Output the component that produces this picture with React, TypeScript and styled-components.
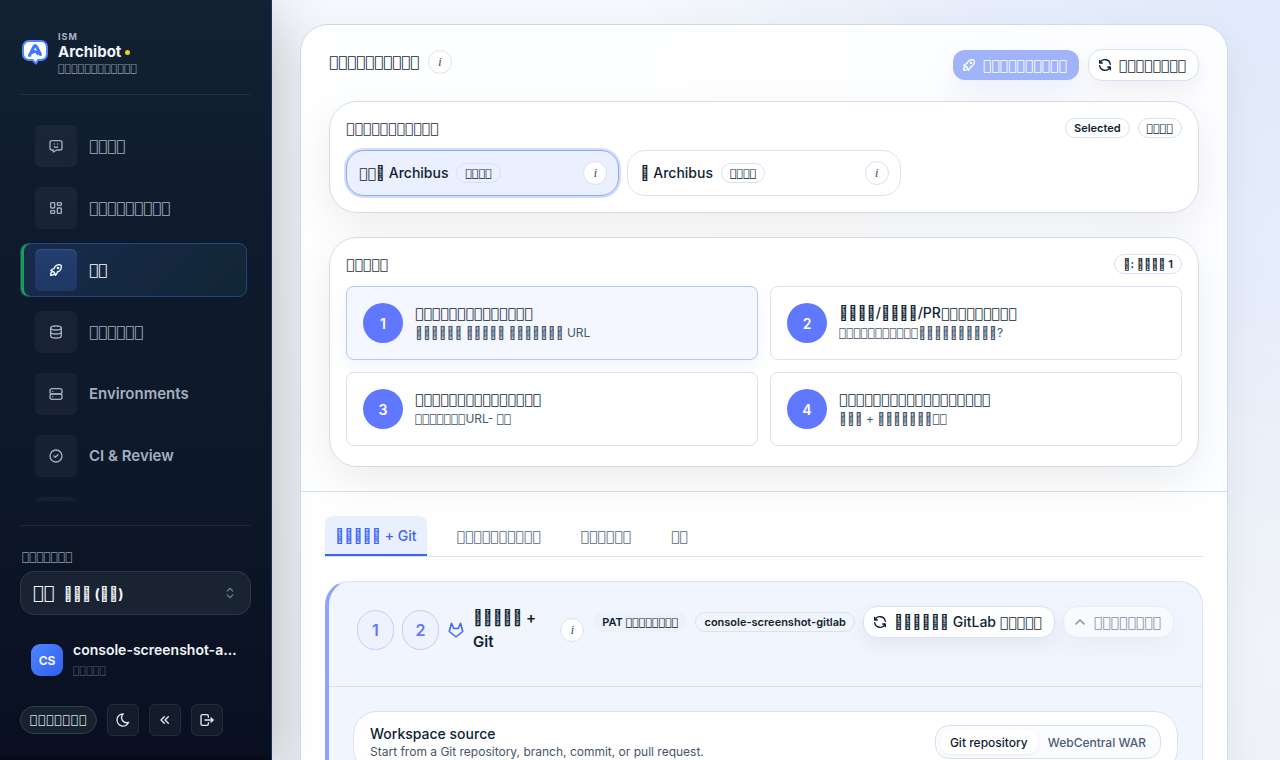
import React from 'react';
import styled, { createGlobalStyle, css } from 'styled-components';
import {
  TbBrandGitlab,
  TbChevronsLeft,
  TbChevronUp,
  TbCircleCheck,
  TbDatabase,
  TbLayoutDashboard,
  TbLogout,
  TbMessageChatbot,
  TbMoon,
  TbRefresh,
  TbRocket,
  TbSelector,
  TbServer,
} from 'react-icons/tb';

const GlobalStyle = createGlobalStyle`
  *, *::before, *::after { box-sizing: border-box; }
  html, body, #root { height: 100%; }
  body {
    margin: 0;
    overflow: hidden;
    color: #0f1f33;
    font-family: Inter, "Liberation Sans", sans-serif;
    font-size: 14px;
    background:
      radial-gradient(circle at 100% 0, #e1eafb 0, rgba(228, 235, 250, 0.8) 320px, rgba(240, 244, 249, 0) 640px),
      linear-gradient(180deg, #f5f8fc 0%, #eff3f7 100%);
  }
  button, select { font: inherit; color: inherit; }
  h1, h2, h3, p { margin: 0; font-weight: inherit; }
`;

/* ---------- glyph runs ---------- */

const OutlineRun = styled.span`
  font-family: "DejaVu Sans", sans-serif;
  font-weight: 400;
  line-height: 1;
`;

const O = ({ n }: { n: number }) => <OutlineRun>{'\uE000'.repeat(n)}</OutlineRun>;
const h = (n: number) => '\u{10FFFD}'.repeat(n);

/* ---------- shell ---------- */

const Shell = styled.div`
  display: flex;
  height: 100vh;
`;

const Sidebar = styled.aside`
  flex: 0 0 272px;
  min-width: 0;
  display: flex;
  flex-direction: column;
  padding: 30px 20px 24px;
  border-right: 1px solid #1b3358;
  background: linear-gradient(180deg, #122233 0%, #0f1a2c 30%, #0d1828 62%, #0a1122 92%, #090f20 100%);
  box-shadow: inset 0 -4px 0 #060a19, 0 12px 56px rgba(0, 0, 0, 0.25);
  color: #f1f5f9;
`;

const Brand = styled.div`
  display: flex;
  align-items: center;
  gap: 8px;
  padding-bottom: 18px;
  border-bottom: 1px solid #222e3e;
`;

const BrandText = styled.div`
  display: flex;
  flex-direction: column;
`;

const Eyebrow = styled.span`
  font-size: 9px;
  font-weight: 700;
  line-height: 14px;
  letter-spacing: 1px;
  color: #a9b4c4;
`;

const BrandName = styled.strong`
  display: flex;
  align-items: center;
  gap: 4px;
  font-size: 15px;
  font-weight: 700;
  line-height: 16px;
`;

const StatusDot = styled.span`
  width: 5px;
  height: 5px;
  border-radius: 50%;
  background: #facc15;
`;

const Muted = styled.span<{ $tone?: string }>`
  font-size: 11px;
  line-height: 16px;
  color: ${p => p.$tone || '#8d99aa'};
`;

const Nav = styled.nav`
  flex: 1;
  min-height: 0;
  overflow: hidden;
  display: flex;
  flex-direction: column;
  gap: 8px;
  margin: 24px 4px 24px 0;
`;

const NavTile = styled.span`
  display: grid;
  place-items: center;
  width: 42px;
  height: 42px;
  border-radius: 6px;
  background: rgba(255, 255, 255, 0.045);
  font-size: 16px;
`;

const NavLink = styled.a<{ $active?: boolean }>`
  flex: 0 0 54px;
  display: flex;
  align-items: center;
  gap: 12px;
  padding: 0 14px;
  border: 1px solid transparent;
  border-radius: 8px;
  color: #a3afc0;
  font-size: 15px;
  font-weight: 600;
  line-height: 20px;
  text-decoration: none;
  ${p => p.$active && css`
    color: #fff;
    border-color: #21457a;
    background: linear-gradient(135deg, #182b4e 0%, #152841 50%, #112634 100%);
    box-shadow: inset 3px 0 0 #16a34a;
    ${NavTile} {
      background: linear-gradient(180deg, #223f70, #1f3764);
      box-shadow: inset 0 1px 0 #35517f;
    }
  `}
`;

const SideFooter = styled.div`
  padding-top: 24px;
  border-top: 1px solid #1c2838;
`;

const LangLabel = styled.label`
  display: block;
  padding-left: 2px;
  margin-bottom: 7px;
  font-size: 12px;
  line-height: 14px;
  color: #8d99aa;
`;

const LangField = styled.div`
  display: flex;
  align-items: center;
  gap: 9px;
  height: 44px;
  padding: 0 12px;
  border: 1px solid #2c3848;
  border-radius: 14px;
  background: #1a2332;
`;

const Flag = styled.span`
  font-size: 18px;
  line-height: 18px;
`;

const LangSelect = styled.select`
  flex: 1;
  min-width: 0;
  padding: 0;
  border: 0;
  outline: 0;
  appearance: none;
  background: transparent;
  font-size: 14px;
  font-weight: 700;
`;

const SelectorIcon = styled(TbSelector)`
  width: 16px;
  height: 16px;
  color: #64748b;
`;

const User = styled.div`
  display: flex;
  align-items: center;
  gap: 10px;
  height: 48px;
  margin: 21px 0 20px;
  padding: 0 11px;
`;

const Avatar = styled.span`
  flex: none;
  display: grid;
  place-items: center;
  width: 32px;
  height: 32px;
  border-radius: 9px;
  background: linear-gradient(135deg, #4f86ff, #2f5ff0);
  font-size: 12px;
  font-weight: 700;
`;

const UserText = styled.div`
  min-width: 0;
  display: flex;
  flex-direction: column;
  gap: 2px;
  padding-bottom: 2px;
`;

const UserName = styled.span`
  overflow: hidden;
  text-overflow: ellipsis;
  white-space: nowrap;
  font-weight: 600;
  line-height: 20px;
`;

const SideActions = styled.div`
  display: flex;
  align-items: center;
  gap: 10px;
`;

const SidePill = styled.button`
  height: 28px;
  padding: 0 9px;
  border: 1px solid #333f4e;
  border-radius: 14px;
  background: #18212e;
  color: #dbe2ea;
  font-size: 12px;
  letter-spacing: 1px;
  line-height: 14px;
`;

const SideButton = styled.button`
  display: grid;
  place-items: center;
  width: 32px;
  height: 32px;
  padding: 0;
  border: 1px solid #222d3b;
  border-radius: 6px;
  background: #121c2a;
  color: #e5eaf0;
  font-size: 16px;
`;

/* ---------- main ---------- */

const Main = styled.main`
  flex: 1;
  min-width: 0;
  padding: 24px 52px 0 28px;
`;

const Panel = styled.div`
  border: 1px solid #d0d9e8;
  border-radius: 28px;
  background: rgba(255, 255, 255, 0.9);
  box-shadow: 0 12px 40px rgba(15, 23, 42, 0.06);
`;

const Overview = styled.section`
  display: flex;
  flex-direction: column;
  padding: 24px 28px;
  border-bottom: 1px solid #d8e1ea;
`;

const Spread = styled.div<{ $bottom?: number; $top?: boolean }>`
  display: flex;
  align-items: ${p => (p.$top ? 'flex-start' : 'center')};
  justify-content: space-between;
  gap: 8px;
  margin-bottom: ${p => p.$bottom || 0}px;
`;

const Group = styled.div<{ $gap?: number }>`
  display: flex;
  align-items: center;
  gap: ${p => p.$gap || 8}px;
`;

const PageTitle = styled.h1`
  font-size: 15px;
  line-height: 26px;
`;

const Info = styled.button`
  flex: none;
  display: grid;
  place-items: center;
  width: 24px;
  height: 24px;
  padding: 0;
  border: 1px solid #d9e2f1;
  border-radius: 50%;
  background: #fff;
  color: #334155;
  font: italic 400 12px/14px "Liberation Serif", serif;
`;

const Button = styled.button<{ $primary?: boolean; $faded?: boolean }>`
  flex: none;
  display: inline-flex;
  align-items: center;
  gap: 6px;
  height: 32px;
  padding: 0 12px 0 8px;
  border: 1px solid #d9e2f1;
  border-radius: 14px;
  background: #fff;
  font-weight: 500;
  line-height: 20px;
  white-space: nowrap;
  box-shadow: 0 8px 20px rgba(15, 23, 70, 0.06);
  opacity: ${p => (p.$faded ? 0.5 : 1)};
  svg { width: 16px; height: 16px; }
  ${p => p.$primary && css`
    height: 30px;
    border: 0;
    border-radius: 12px;
    background: #9fb4fb;
    color: #fff;
    box-shadow: 0 10px 24px rgba(79, 110, 247, 0.1);
  `}
`;

const Card = styled.section<{ $last?: boolean }>`
  padding: 16px 16px ${p => (p.$last ? 20 : 16)}px;
  border: 1px solid #d3dcea;
  border-radius: 28px;
  background: #fff;
  box-shadow: 0 14px 40px rgba(0, 0, 0, 0.07);
  & + & { margin-top: 24px; }
`;

const CardTitle = styled.h2`
  font-size: 14px;
  line-height: 20px;
  color: #1e2b3d;
`;

const Badge = styled.span<{ $plain?: boolean }>`
  flex: none;
  display: inline-flex;
  align-items: center;
  height: 20px;
  padding: 0 8px;
  border: 1px solid ${p => (p.$plain ? 'transparent' : '#d9e2f1')};
  border-radius: 10px;
  background: ${p => (p.$plain ? '#edf1fa' : 'transparent')};
  font-size: 11px;
  font-weight: 600;
  line-height: 14px;
  white-space: pre;
`;

const Options = styled.div`
  display: grid;
  grid-template-columns: repeat(3, 1fr);
  gap: 8px;
`;

const Option = styled.div<{ $selected?: boolean }>`
  display: flex;
  align-items: center;
  gap: 8px;
  height: 46px;
  padding: 0 11px 0 12px;
  border: 1px solid #d9e2f1;
  border-radius: 18px;
  font-weight: 500;
  line-height: 20px;
  ${Info} { margin-left: auto; }
  ${p => p.$selected && css`
    border-color: #8fa8f8;
    background: #eaf0fe;
    box-shadow: 0 0 0 2px #d3defc;
  `}
`;

const Steps = styled.ol`
  display: grid;
  grid-template-columns: repeat(2, 1fr);
  gap: 12px;
  margin: 0;
  padding: 0;
  list-style: none;
`;

const Step = styled.li<{ $current?: boolean }>`
  display: flex;
  align-items: center;
  gap: 12px;
  height: 74px;
  padding: 0 16px;
  border: 1px solid #d9e2ef;
  border-radius: 8px;
  background: #fff;
  ${p => p.$current && css`
    border-color: #b9c7f3;
    background: #f4f7ff;
    box-shadow: 0 8px 20px rgba(79, 110, 247, 0.07);
  `}
`;

const StepNumber = styled.span`
  flex: none;
  display: grid;
  place-items: center;
  width: 40px;
  height: 40px;
  border-radius: 50%;
  background: #6078ff;
  color: #fff;
  font-weight: 600;
`;

const StepTitle = styled.h3`
  font-size: 14px;
  font-weight: 500;
  line-height: 20px;
`;

const Hint = styled.p<{ $line?: number }>`
  font-size: 12px;
  line-height: ${p => p.$line || 20}px;
  color: #46566c;
`;

const Workspace = styled.section`
  padding: 24px;
`;

const Tabs = styled.div`
  display: flex;
  gap: 20px;
  margin-bottom: 24px;
  border-bottom: 1px solid #dbe3f0;
`;

const Tab = styled.button<{ $active?: boolean }>`
  height: 40px;
  padding: 2px 10px 0;
  border: 0;
  border-bottom: 2px solid ${p => (p.$active ? '#3b66f5' : 'transparent')};
  border-radius: 8px 8px 0 0;
  background: ${p => (p.$active ? '#e9effd' : 'transparent')};
  color: ${p => (p.$active ? '#3b66f5' : '#56657c')};
  font-weight: 500;
  line-height: 20px;
`;

const Stage = styled.article`
  border: 1px solid #d9e2f2;
  border-left: 4px solid #8ea3fb;
  border-radius: 24px;
  background: #f1f5fe;
`;

const StageHeader = styled.header`
  display: flex;
  align-items: flex-start;
  gap: 9px;
  padding: 24px 28px 32px;
  border-bottom: 1px solid #d7e0ee;
`;

const StageHeading = styled.div`
  flex: 1;
  min-width: 0;
  display: flex;
  align-items: center;
  gap: 8px;
`;

const StageNumber = styled.span`
  flex: none;
  display: grid;
  place-items: center;
  width: 37px;
  height: 40px;
  border: 1px solid #c3cef4;
  border-radius: 20px;
  background: #eef2fe;
  color: #6078ff;
  font-size: 16px;
  font-weight: 600;
`;

const GitlabIcon = styled(TbBrandGitlab)`
  flex: none;
  width: 18px;
  height: 18px;
  color: #3b66f5;
`;

const StageTitle = styled.h2`
  flex: 1;
  min-width: 0;
  font-size: 15px;
  font-weight: 600;
  line-height: 24px;
`;

const StageBody = styled.div`
  padding: 24px;
`;

const Source = styled.div`
  display: flex;
  align-items: center;
  justify-content: space-between;
  padding: 12px 16px;
  border: 1px solid #d9e2f1;
  border-radius: 24px;
  background: #fff;
`;

const Segmented = styled.div`
  display: flex;
  height: 34px;
  padding: 4px;
  border: 1px solid #d5dff0;
  border-radius: 14px;
  background: #fbfcff;
`;

const Segment = styled.button<{ $active?: boolean }>`
  padding: 0 10px;
  border: 0;
  border-radius: 10px;
  background: ${p => (p.$active ? '#fff' : 'transparent')};
  box-shadow: ${p => (p.$active ? '0 1px 3px rgba(15, 23, 42, 0.08)' : 'none')};
  color: ${p => (p.$active ? '#0f1f33' : '#4d5d76')};
  font-size: 12px;
  font-weight: 500;
`;

const Logo = () => (
  <svg width="30" height="30" viewBox="0 0 30 30" aria-hidden="true">
    <path
      d="M9 3h12a6 6 0 0 1 6 6v7a6 6 0 0 1-6 6h-3l-2 3.500-3.500-3.500H9a6 6 0 0 1-6-6v-7a6 6 0 0 1 6-6z"
      fill="#fff"
      stroke="#4f86ff"
      strokeWidth="2"
      strokeLinejoin="round"
    />
    <path d="M9.500 17.500L14 8.500q1.200-1.800 2.400 0L20.500 16.500M12 14.500q3-2.500 6 1" fill="none" stroke="#3f7bff" strokeWidth="3" strokeLinecap="round" strokeLinejoin="round" />
  </svg>
);

const navItems = [
  { icon: <TbMessageChatbot />, label: <O n={4} /> },
  { icon: <TbLayoutDashboard />, label: <O n={9} /> },
  { icon: <TbRocket />, label: <O n={2} />, active: true },
  { icon: <TbDatabase />, label: <O n={6} /> },
  { icon: <TbServer />, label: 'Environments' },
  { icon: <TbCircleCheck />, label: 'CI & Review' },
  { icon: null, label: null },
];

const steps = [
  { title: <O n={14} />, hint: `${h(6)} ${h(5)} ${h(7)} URL`, current: true },
  { title: <>{h(4)}/{h(4)}/PR<O n={9} /></>, hint: <><O n={11} />{h(10)}?</> },
  { title: <O n={15} />, hint: <><O n={7} />URL- <O n={2} /></> },
  { title: <O n={18} />, hint: <>{h(3)} + {h(7)}<O n={2} /></> },
];

export default function App() {
  return (
    <Shell>
      <GlobalStyle />
      <Sidebar>
        <Brand>
          <Logo />
          <BrandText>
            <Eyebrow>ISM</Eyebrow>
            <BrandName>Archibot<StatusDot /></BrandName>
            <Muted><O n={12} /></Muted>
          </BrandText>
        </Brand>
        <Nav>
          {navItems.map((item, i) => (
            <NavLink key={i} href="#" $active={item.active}>
              <NavTile>{item.icon}</NavTile>
              {item.label && <span>{item.label}</span>}
            </NavLink>
          ))}
        </Nav>
        <SideFooter>
          <LangLabel htmlFor="language"><O n={7} /></LangLabel>
          <LangField>
            <Flag><O n={2} /></Flag>
            <LangSelect id="language">
              <option>{`${h(3)} (${h(2)})`}</option>
            </LangSelect>
            <SelectorIcon />
          </LangField>
          <User>
            <Avatar>CS</Avatar>
            <UserText>
              <UserName>console-screenshot-admin</UserName>
              <Muted $tone="#475569"><O n={5} /></Muted>
            </UserText>
          </User>
          <SideActions>
            <SidePill><O n={7} /></SidePill>
            <SideButton aria-label="Theme"><TbMoon /></SideButton>
            <SideButton aria-label="Collapse"><TbChevronsLeft /></SideButton>
            <SideButton aria-label="Log out"><TbLogout /></SideButton>
          </SideActions>
        </SideFooter>
      </Sidebar>

      <Main>
        <Panel>
          <Overview>
            <Spread $bottom={20} $top>
              <Group $gap={9}>
                <PageTitle><O n={10} /></PageTitle>
                <Info>i</Info>
              </Group>
              <Group $gap={9}>
                <Button $primary><TbRocket /><span><O n={10} /></span></Button>
                <Button><TbRefresh /><span><O n={8} /></span></Button>
              </Group>
            </Spread>

            <Card>
              <Spread $bottom={12}>
                <CardTitle><O n={11} /></CardTitle>
                <Group>
                  <Badge>Selected</Badge>
                  <Badge><O n={4} /></Badge>
                </Group>
              </Spread>
              <Options>
                <Option $selected>
                  <span><O n={2} />{h(1)} Archibus</span>
                  <Badge><O n={4} /></Badge>
                  <Info>i</Info>
                </Option>
                <Option>
                  <span>{h(1)} Archibus</span>
                  <Badge><O n={4} /></Badge>
                  <Info>i</Info>
                </Option>
              </Options>
            </Card>

            <Card $last>
              <Spread $bottom={12}>
                <CardTitle><O n={5} /></CardTitle>
                <Badge>{`${h(1)}: ${h(4)} 1`}</Badge>
              </Spread>
              <Steps>
                {steps.map((step, i) => (
                  <Step key={i} $current={step.current}>
                    <StepNumber>{i + 1}</StepNumber>
                    <div>
                      <StepTitle>{step.title}</StepTitle>
                      <Hint>{step.hint}</Hint>
                    </div>
                  </Step>
                ))}
              </Steps>
            </Card>
          </Overview>

          <Workspace>
            <Tabs>
              <Tab $active>{`${h(5)} + Git`}</Tab>
              <Tab><O n={10} /></Tab>
              <Tab><O n={6} /></Tab>
              <Tab><O n={2} /></Tab>
            </Tabs>
            <Stage>
              <StageHeader>
                <StageHeading>
                  <StageNumber>1</StageNumber>
                  <StageNumber>2</StageNumber>
                  <GitlabIcon />
                  <StageTitle>{`${h(5)} + Git`}</StageTitle>
                  <Info>i</Info>
                </StageHeading>
                <Group>
                  <Badge $plain>PAT <O n={8} /></Badge>
                  <Badge>console-screenshot-gitlab</Badge>
                  <Button><TbRefresh /><span>{h(6)} GitLab <O n={5} /></span></Button>
                  <Button $faded><TbChevronUp /><span><O n={8} /></span></Button>
                </Group>
              </StageHeader>
              <StageBody>
                <Source>
                  <div>
                    <StepTitle>Workspace source</StepTitle>
                    <Hint $line={16}>Start from a Git repository, branch, commit, or pull request.</Hint>
                  </div>
                  <Segmented>
                    <Segment $active>Git repository</Segment>
                    <Segment>WebCentral WAR</Segment>
                  </Segmented>
                </Source>
              </StageBody>
            </Stage>
          </Workspace>
        </Panel>
      </Main>
    </Shell>
  );
}
